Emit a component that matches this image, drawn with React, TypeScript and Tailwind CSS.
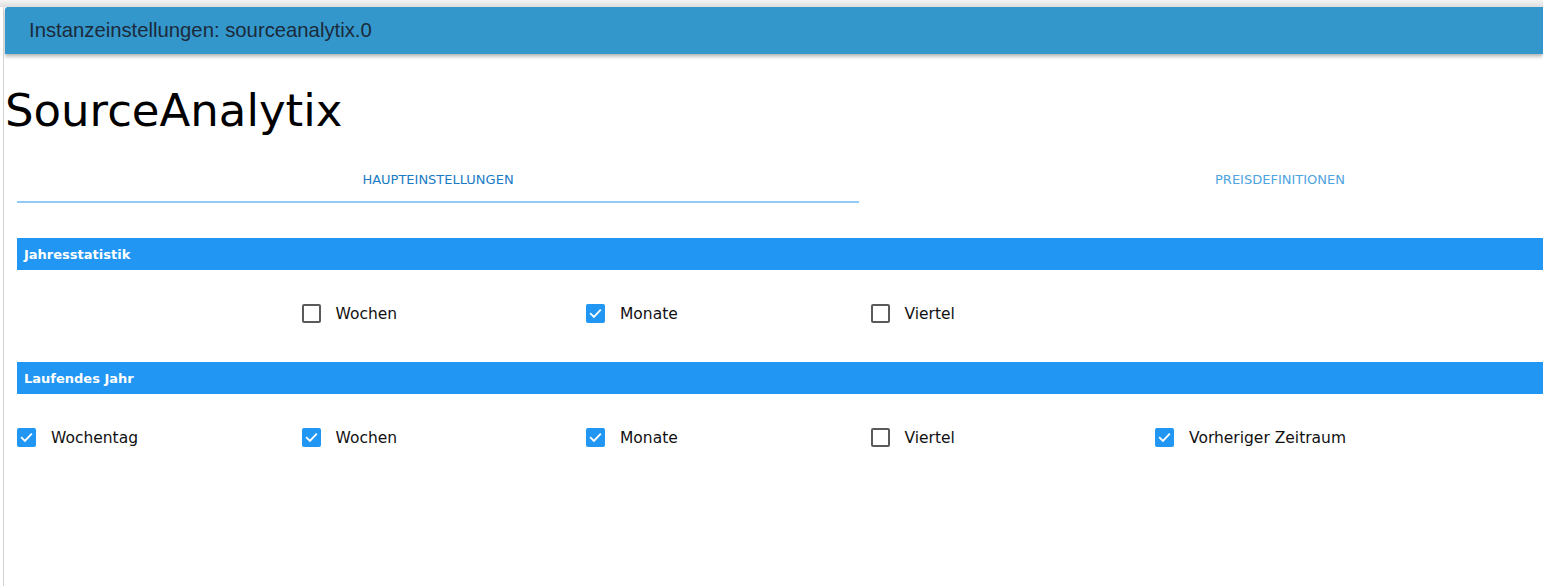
import React from 'react';

type Item = { label: string; checked: boolean } | null;

const yearly: Item[] = [
  null,
  { label: 'Wochen', checked: false },
  { label: 'Monate', checked: true },
  { label: 'Viertel', checked: false },
];

const current: Item[] = [
  { label: 'Wochentag', checked: true },
  { label: 'Wochen', checked: true },
  { label: 'Monate', checked: true },
  { label: 'Viertel', checked: false },
  { label: 'Vorheriger Zeitraum', checked: true },
];

function Box({ checked }: { checked: boolean }) {
  if (!checked) {
    return <span className="block w-[19px] h-[19px] rounded-[2px] border-2 border-[#5a5a5a] bg-white" />;
  }
  return (
    <span className="flex items-center justify-center w-[19px] h-[19px] rounded-[2px] bg-[#2196f3]">
      <svg width="15" height="15" viewBox="0 0 24 24" fill="none">
        <path d="M4.5 12.5l5 5L19.5 7" stroke="white" strokeWidth="3" strokeLinecap="square" />
      </svg>
    </span>
  );
}

function CheckRow({ items }: { items: Item[] }) {
  return (
    <div className="h-[92px] pt-[31px]">
      <div className="grid grid-cols-[repeat(6,284.5px)]">
        {items.map((it, i) =>
          it ? (
            <label key={i} className="flex items-center h-6 gap-[15px]">
              <Box checked={it.checked} />
              <span className="text-[15.5px] text-[#111] pt-[3px]">{it.label}</span>
            </label>
          ) : (
            <div key={i} />
          )
        )}
      </div>
    </div>
  );
}

function SectionBar({ title }: { title: string }) {
  return (
    <div className="h-8 bg-[#2196f3] flex items-center pl-[7px]">
      <span className="text-white text-[13px] font-bold pt-px">{title}</span>
    </div>
  );
}

export default function App() {
  return (
    <div className="h-[586px] w-[1543px] overflow-hidden bg-white" style={{ fontFamily: '"DejaVu Sans", sans-serif' }}>
      <div className="h-[7px] bg-gradient-to-b from-[#f4f4f4] to-[#dedede]" />
      <div className="ml-[3px] h-[579px] border-l border-[#d2d2d2] pl-px overflow-hidden">
        <header className="h-[47px] bg-[#3497cb] rounded-tl-[3px] shadow-[0_2px_4px_rgba(0,0,0,0.35)] flex items-center pl-6">
          <span className="text-[20.3px] text-[#1b2a3a]" style={{ fontFamily: '"Liberation Sans", Arial, sans-serif' }}>
            Instanzeinstellungen: sourceanalytix.0
          </span>
        </header>

        <h1 className="mt-[30px] text-[45px] leading-[54px] text-black">SourceAnalytix</h1>

        <div className="w-[1720px] px-3">
          <div className="mt-[18px] flex">
            <div className="w-[842px] h-[47px] flex items-center justify-center border-b-2 border-[#90caf9] pt-[3px]">
              <span className="text-[13px] text-[#1a7bc4]">HAUPTEINSTELLUNGEN</span>
            </div>
            <div className="w-[842px] h-[47px] flex items-center justify-center pt-[1px]">
              <span className="text-[13px] text-[#4ea4df]">PREISDEFINITIONEN</span>
            </div>
          </div>

          <div className="mt-[35px]">
            <SectionBar title="Jahresstatistik" />
            <CheckRow items={yearly} />
            <SectionBar title="Laufendes Jahr" />
            <CheckRow items={current} />
          </div>
        </div>
      </div>
    </div>
  );
}
